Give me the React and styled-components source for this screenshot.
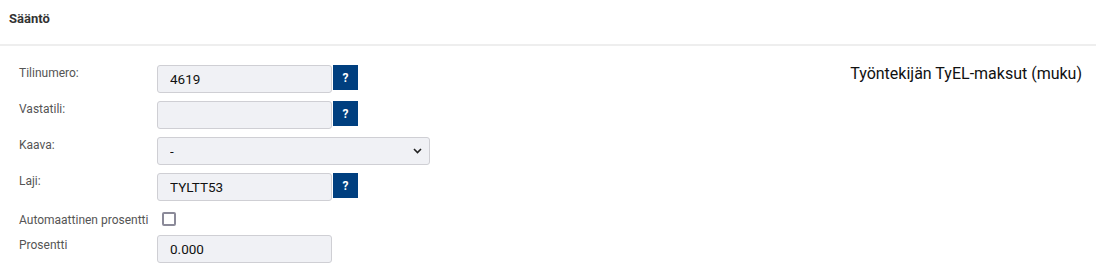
import React from "react";
import styled, { createGlobalStyle } from "styled-components";

const GlobalStyle = createGlobalStyle`
  body {
    margin: 0;
    background: #fff;
    font-family: Roboto, "Liberation Sans", sans-serif;
  }
`;

const Header = styled.div`
  height: 44px;
  padding: 0 9px;
  display: flex;
  align-items: center;
  border-bottom: 2px solid #eeeeee;
`;

const Title = styled.h3`
  margin: 0;
  margin-top: -7px;
  font-size: 13px;
  font-weight: 700;
  color: #333;
`;

const Body = styled.div`
  display: flex;
  justify-content: space-between;
  padding: 19px 14px 0 19px;
`;

const Form = styled.div`
  display: flex;
  flex-direction: column;
`;

const Row = styled.div`
  display: flex;
  align-items: flex-start;
  margin-bottom: ${(p) => p.$gap || 8}px;
  height: ${(p) => p.$height || 28}px;
`;

const Label = styled.label`
  width: 138px;
  flex-shrink: 0;
  font-size: 12px;
  line-height: 14px;
  color: #555;
  white-space: nowrap;
  padding-top: ${(p) => p.$top || 1}px;
`;

const Input = styled.input`
  box-sizing: border-box;
  width: 175px;
  height: 28px;
  padding: 0 12px;
  border: 1px solid #cfcfd4;
  border-radius: 3px;
  background: #f0f1f5;
  font-family: Roboto, "Liberation Sans", sans-serif;
  font-size: 13.5px;
  color: #111;
  outline: none;
`;

const HelpButton = styled.button`
  width: 25px;
  height: 25px;
  margin-left: 1px;
  padding: 0;
  border: none;
  background: #003f7f;
  color: #fff;
  font-family: Roboto, "Liberation Sans", sans-serif;
  font-size: 12px;
  font-weight: 700;
  cursor: pointer;
`;

const SelectWrap = styled.div`
  position: relative;
  width: 273px;
  height: 28px;
`;

const Select = styled.select`
  box-sizing: border-box;
  width: 100%;
  height: 28px;
  padding: 0 12px;
  appearance: none;
  border: 1px solid #cfcfd4;
  border-radius: 3px;
  background: #f0f1f5;
  font-family: Roboto, "Liberation Sans", sans-serif;
  font-size: 13.5px;
  color: #111;
  outline: none;
`;

const Chevron = styled.svg`
  position: absolute;
  right: 8px;
  top: 11px;
  pointer-events: none;
`;

const Checkbox = styled.span`
  display: inline-block;
  box-sizing: border-box;
  width: 14px;
  height: 14px;
  margin: 3px 0 0 5px;
  border: 2px solid #8b8a99;
  border-radius: 2px;
  background: #fff;
`;

const Description = styled.div`
  font-size: 16px;
  color: #111;
  line-height: 18px;
`;

const fields = [
  { label: "Tilinumero:", value: "4619", help: true },
  { label: "Vastatili:", value: "", help: true },
];

export default function App() {
  return (
    <>
      <GlobalStyle />
      <Header>
        <Title>Sääntö</Title>
      </Header>
      <Body>
        <Form>
          {fields.map((f) => (
            <Row key={f.label}>
              <Label>{f.label}</Label>
              <Input defaultValue={f.value} />
              {f.help && <HelpButton>?</HelpButton>}
            </Row>
          ))}
          <Row>
            <Label>Kaava:</Label>
            <SelectWrap>
              <Select defaultValue="-">
                <option value="-">-</option>
              </Select>
              <Chevron width="9" height="6" viewBox="0 0 9 6">
                <path d="M1 1 L4.5 4.5 L8 1" fill="none" stroke="#222" strokeWidth="1.6" />
              </Chevron>
            </SelectWrap>
          </Row>
          <Row>
            <Label>Laji:</Label>
            <Input defaultValue="TYLTT53" />
            <HelpButton>?</HelpButton>
          </Row>
          <Row $height={20} $gap={6}>
            <Label $top={4}>Automaattinen prosentti</Label>
            <Checkbox />
          </Row>
          <Row>
            <Label $top={3}>Prosentti</Label>
            <Input defaultValue="0.000" />
          </Row>
        </Form>
        <Description>Työntekijän TyEL-maksut (muku)</Description>
      </Body>
    </>
  );
}
